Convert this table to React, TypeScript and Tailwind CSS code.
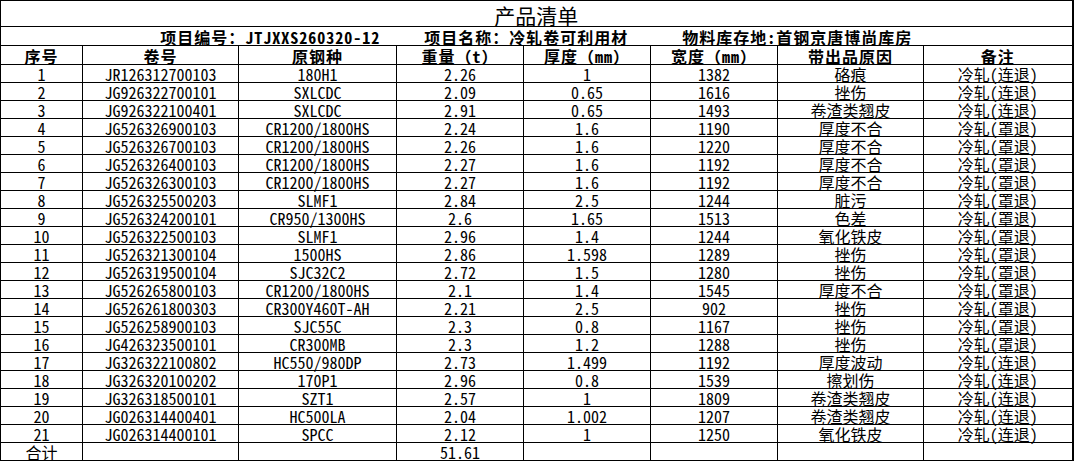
import React from 'react';

type Row = [string, string, string, string, string, string, string];

const rows: Row[] = [
  ['JR126312700103', '180H1', '2.26', '1', '1382', '硌痕', '冷轧(连退)'],
  ['JG926322700101', 'SXLCDC', '2.09', '0.65', '1616', '挫伤', '冷轧(连退)'],
  ['JG926322100401', 'SXLCDC', '2.91', '0.65', '1493', '卷渣类翘皮', '冷轧(连退)'],
  ['JG526326900103', 'CR1200/1800HS', '2.24', '1.6', '1190', '厚度不合', '冷轧(罩退)'],
  ['JG526326700103', 'CR1200/1800HS', '2.26', '1.6', '1220', '厚度不合', '冷轧(罩退)'],
  ['JG526326400103', 'CR1200/1800HS', '2.27', '1.6', '1192', '厚度不合', '冷轧(罩退)'],
  ['JG526326300103', 'CR1200/1800HS', '2.27', '1.6', '1192', '厚度不合', '冷轧(罩退)'],
  ['JG526325500203', 'SLMF1', '2.84', '2.5', '1244', '脏污', '冷轧(罩退)'],
  ['JG526324200101', 'CR950/1300HS', '2.6', '1.65', '1513', '色差', '冷轧(罩退)'],
  ['JG526322500103', 'SLMF1', '2.96', '1.4', '1244', '氧化铁皮', '冷轧(罩退)'],
  ['JG526321300104', '1500HS', '2.86', '1.598', '1289', '挫伤', '冷轧(罩退)'],
  ['JG526319500104', 'SJC32C2', '2.72', '1.5', '1280', '挫伤', '冷轧(罩退)'],
  ['JG526265800103', 'CR1200/1800HS', '2.1', '1.4', '1545', '厚度不合', '冷轧(罩退)'],
  ['JG526261800303', 'CR300Y460T-AH', '2.21', '2.5', '902', '挫伤', '冷轧(罩退)'],
  ['JG526258900103', 'SJC55C', '2.3', '0.8', '1167', '挫伤', '冷轧(罩退)'],
  ['JG426323500101', 'CR300MB', '2.3', '1.2', '1288', '挫伤', '冷轧(罩退)'],
  ['JG326322100802', 'HC550/980DP', '2.73', '1.499', '1192', '厚度波动', '冷轧(连退)'],
  ['JG326320100202', '170P1', '2.96', '0.8', '1539', '擦划伤', '冷轧(连退)'],
  ['JG326318500101', 'SZT1', '2.57', '1', '1809', '卷渣类翘皮', '冷轧(连退)'],
  ['JG026314400401', 'HC500LA', '2.04', '1.002', '1207', '卷渣类翘皮', '冷轧(连退)'],
  ['JG026314400101', 'SPCC', '2.12', '1', '1250', '氧化铁皮', '冷轧(连退)'],
];

const headers = ['序号', '卷号', '原钢种', '重量（t）', '厚度（mm）', '宽度（mm）', '带出品原因', '备注'];
const widths = ['w-[82px]', 'w-[156px]', 'w-[158px]', 'w-[127px]', 'w-[127px]', 'w-[127px]', 'w-[146px]', 'w-[149px]'];

const cell = 'border border-black p-0 align-bottom text-center leading-[16px] whitespace-nowrap';

export default function App() {
  return (
    <div className="bg-white text-black font-['Noto_Sans_Mono_CJK_SC','Noto_Sans_CJK_SC','Liberation_Mono',monospace] text-[16px]">
      <table className="table-fixed border-collapse w-[1072px] border-r-2 border-black">
        <colgroup>
          {widths.map((w, i) => (
            <col key={i} className={w} />
          ))}
        </colgroup>
        <tbody>
          <tr className="h-[26px]">
            <td colSpan={8} className={`${cell} text-[21px] leading-[21px]`}>
              产品清单
            </td>
          </tr>
          <tr className="h-[19px]">
            <td colSpan={8} className={`${cell} font-bold tracking-[1px]`}>
              <span>项目编号：JTJXXS260320-12</span>
              <span className="ml-[44px]">项目名称：冷轧卷可利用材</span>
              <span className="ml-[54px]">物料库存地:首钢京唐博尚库房</span>
            </td>
          </tr>
          <tr className="h-[19px]">
            {headers.map((h) => (
              <td key={h} className={`${cell} font-bold tracking-[1px]`}>
                {h}
              </td>
            ))}
          </tr>
          {rows.map((r, i) => (
            <tr key={i} className="h-[18px]">
              <td className={cell}>{i + 1}</td>
              {r.map((v, j) => (
                <td key={j} className={cell}>
                  {v}
                </td>
              ))}
            </tr>
          ))}
          <tr className="h-[18px]">
            <td className={cell}>合计</td>
            <td className={cell}></td>
            <td className={cell}></td>
            <td className={cell}>51.61</td>
            <td className={cell}></td>
            <td className={cell}></td>
            <td className={cell}></td>
            <td className={cell}></td>
          </tr>
        </tbody>
      </table>
    </div>
  );
}
